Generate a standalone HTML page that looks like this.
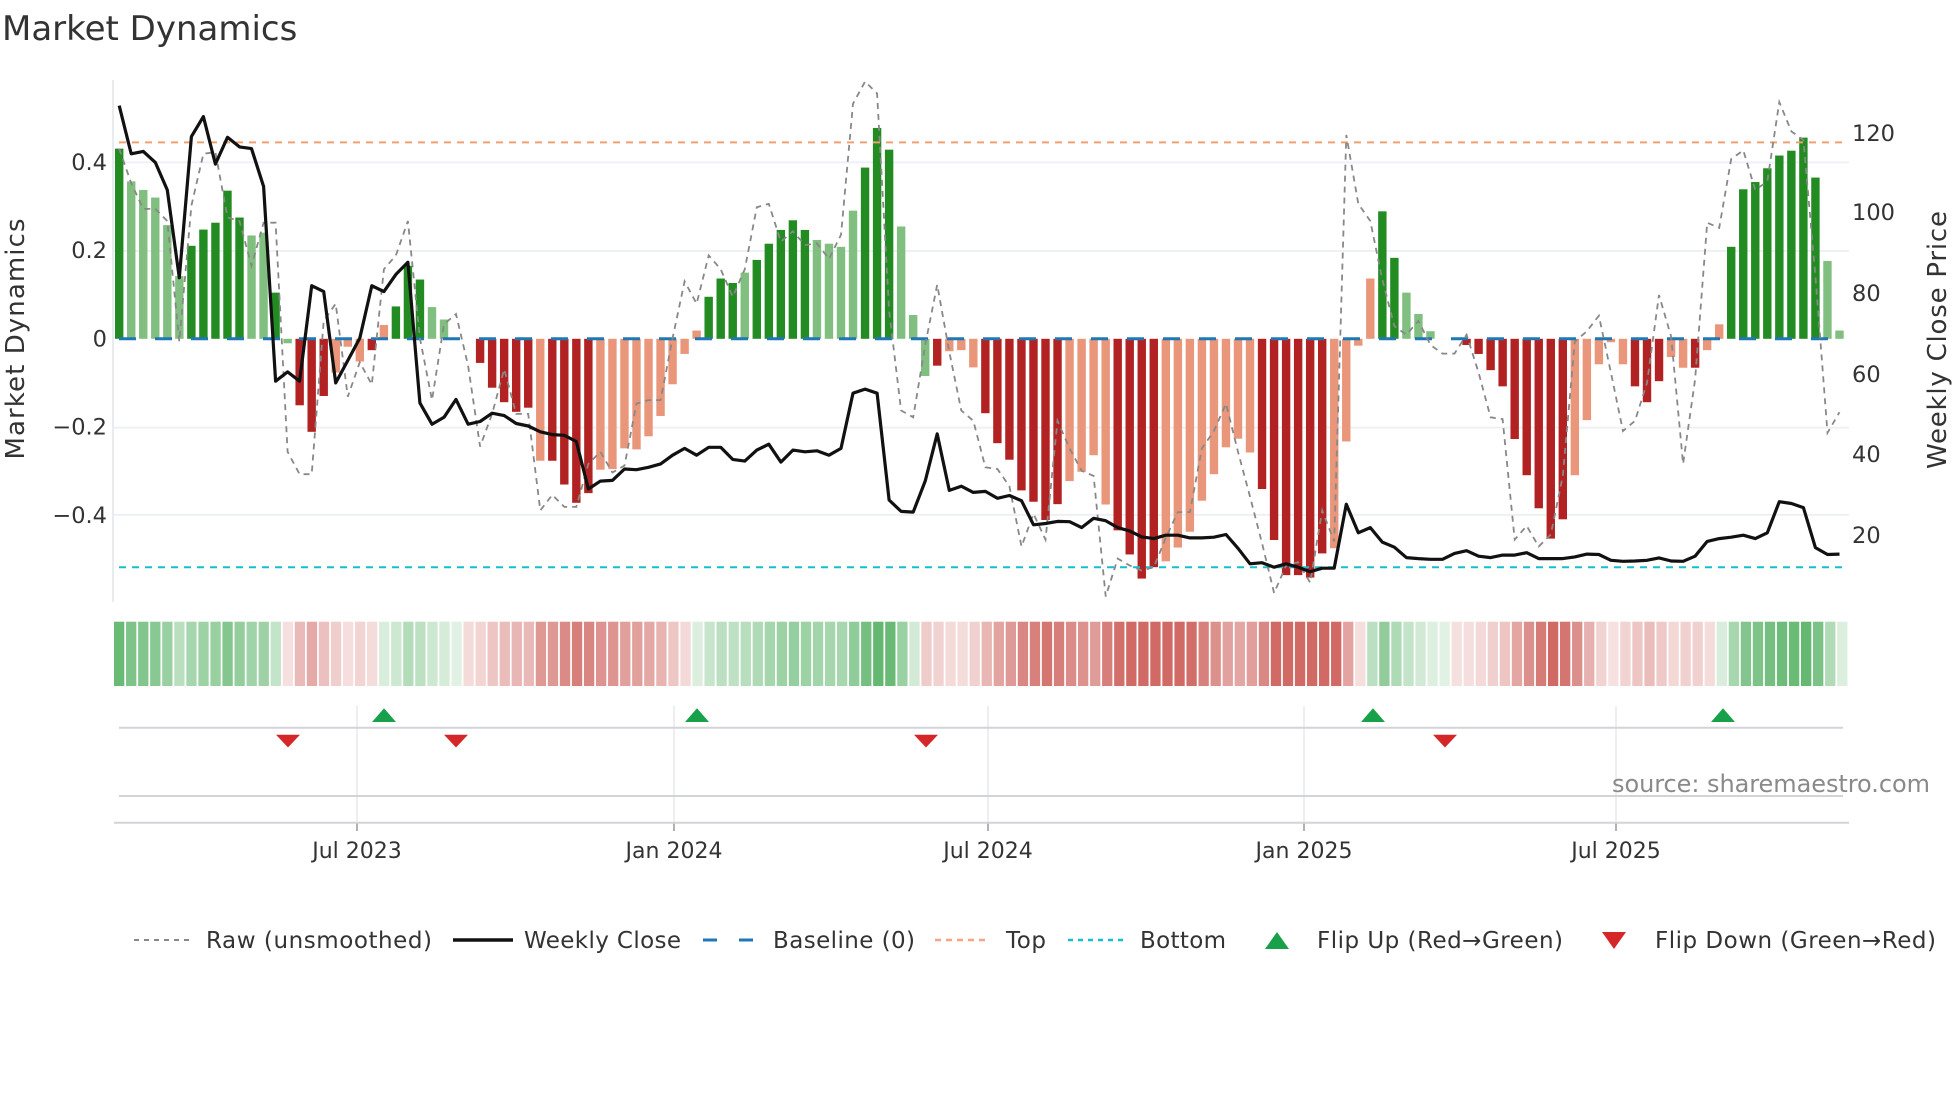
<!DOCTYPE html>
<html><head><meta charset="utf-8"><style>
html,body{margin:0;padding:0;background:#fff;width:1960px;height:1102px;overflow:hidden}
svg{display:block}
text{font-family:"DejaVu Sans","Liberation Sans",sans-serif;fill:#333}
</style></head><body>
<svg id="s" width="1960" height="1102" viewBox="0 0 1960 1102" xmlns="http://www.w3.org/2000/svg">
<rect width="1960" height="1102" fill="#fff"/>
<text x="2" y="40" font-size="34">Market Dynamics</text>
<g id="grid"></g>
<g id="bars"></g>
<g id="lines"></g>
<g font-size="22.5" text-anchor="end">
<text x="107" y="170">0.4</text>
<text x="107" y="258">0.2</text>
<text x="107" y="346.5">0</text>
<text x="107" y="434.5">−0.2</text>
<text x="107" y="523">−0.4</text>
</g>
<g font-size="22.5">
<text x="1852" y="141">120</text>
<text x="1852" y="220">100</text>
<text x="1852" y="301">80</text>
<text x="1852" y="382">60</text>
<text x="1852" y="462">40</text>
<text x="1852" y="543">20</text>
</g>
<text transform="translate(24,339) rotate(-90)" font-size="26" text-anchor="middle" textLength="241">Market Dynamics</text>
<text transform="translate(1946,340) rotate(-90)" font-size="26" text-anchor="middle" textLength="258">Weekly Close Price</text>
<g id="heat"></g>
<g id="lower"></g>
<text x="1612" y="792" font-size="24" fill="#8a8a8a" style="fill:#8a8a8a" textLength="318">source: sharemaestro.com</text>
<g font-size="22" text-anchor="middle">
<text x="357" y="858">Jul 2023</text>
<text x="674" y="858">Jan 2024</text>
<text x="988" y="858">Jul 2024</text>
<text x="1304" y="858">Jan 2025</text>
<text x="1616" y="858">Jul 2025</text>
</g>
<g id="legend" font-size="23">
<line x1="134" y1="940" x2="191" y2="940" stroke="#888" stroke-width="2" stroke-dasharray="5,5"/>
<text x="206" y="948" textLength="226">Raw (unsmoothed)</text>
<line x1="453" y1="940" x2="513" y2="940" stroke="#111" stroke-width="3.5"/>
<text x="524" y="948" textLength="157">Weekly Close</text>
<line x1="703" y1="940" x2="758" y2="940" stroke="#1f77b4" stroke-width="3" stroke-dasharray="14,22"/>
<text x="773" y="948" textLength="142">Baseline (0)</text>
<line x1="935" y1="940" x2="990" y2="940" stroke="#f4a582" stroke-width="2.5" stroke-dasharray="6,5"/>
<text x="1006" y="948" textLength="40">Top</text>
<line x1="1068" y1="940" x2="1123" y2="940" stroke="#17becf" stroke-width="2.5" stroke-dasharray="5,5"/>
<text x="1140" y="948" textLength="86">Bottom</text>
<polygon points="1265,949 1277,932 1289,949" fill="#18a04a"/>
<text x="1317" y="948" textLength="246">Flip Up (Red→Green)</text>
<polygon points="1602,932 1626,932 1614,949" fill="#d62728"/>
<text x="1655" y="948" textLength="281">Flip Down (Green→Red)</text>
</g>
</svg>
<script>
(function(){
var NS="http://www.w3.org/2000/svg";
function el(p,t,a){var e=document.createElementNS(NS,t);for(var k in a)e.setAttribute(k,a[k]);p.appendChild(e);return e;}
var Y=function(z){return 69.4+z*0.3445;};
var X=function(n){return 119.2+(n-1)*12.03;};
var base=Y(782);
var bz=[230,325,350,372,452,600,512,465,445,352,430,482,474,648,795,975,1052,948,880,805,848,815,742,688,570,610,690,726,782,820,852,924,966,994,982,1136,1136,1205,1258,1230,1162,1160,1100,1103,1065,1006,914,826,758,660,
607,620,590,553,506,466,438,466,495,506,515,410,285,170,233,456,713,890,860,818,815,865,998,1085,1133,1222,1255,1308,1262,1195,1168,1120,1263,1338,1408,1478,1445,1428,1388,1342,1252,1175,1097,1072,1112,1218,1366,1468,
1468,1475,1405,1390,1080,802,607,412,547,648,710,760,782,795,800,826,873,920,1073,1178,1274,1362,1306,1178,1018,856,792,856,920,966,905,835,866,866,815,740,515,348,327,287,250,236,198,314,556,758];
var ty="dllllldddddlldlDDDLLLDLdddlllxDDDDDLDDDDLLLLLLLLLdd"+"dlddddd"+"llllddd"+"lll"+"DLLLDDDDDDDLLLLDDDDLLLLLLLLDDDD"+"DDLLLLddllllxDDDDDDDDDLLLLLDDDLLDLLddddddddlll";
var cz=[105,245,238,270,350,605,195,137,275,197,225,230,340,905,878,905,628,645,910,845,780,628,645,595,560,968,1030,1010,958,1030,1022,998,1005,1028,1035,1052,1060,1062,1080,1218,1195,1193,1160,1162,1155,1145,1120,1100,
1120,1097,1097,1132,1137,1105,1088,1140,1105,1110,1107,1120,1100,940,928,940,1250,1283,1285,1195,1058,1222,1210,1228,1225,1245,1237,1252,1322,1318,1312,1313,1330,1303,1310,1330,1340,1357,1362,1352,1352,1360,1360,1358,1350,1390,1435,1432,1445,1435,
1445,1458,1448,1448,1262,1345,1330,1372,1387,1417,1420,1422,1422,1405,1397,1413,1417,1410,1410,1403,1420,1420,1420,1415,1407,1408,1425,1428,1427,1425,1418,1427,1428,1413,1370,1362,1358,1352,1362,1345,1255,1260,1272,1388,1408,1407];
var rz=[230,330,405,405,440,790,395,245,240,430,440,570,445,445,1110,1175,1175,730,680,950,850,915,580,540,440,780,960,740,710,860,1095,1000,870,1000,1000,1280,1235,1270,1270,1145,1110,1170,1150,970,960,960,780,615,680,540,
580,660,580,400,390,500,470,510,505,550,480,100,35,70,700,990,1010,800,625,820,990,1020,1155,1160,1210,1385,1290,1365,1020,1100,1165,1180,1530,1420,1440,1455,1445,1360,1285,1285,1100,1050,970,1110,1240,1375,1520,1440,
1430,1490,1280,1370,190,390,440,610,745,770,730,800,825,825,770,880,1010,1015,1365,1325,1385,1350,1180,790,760,715,880,1050,1020,910,655,775,1145,900,445,460,260,235,350,325,95,180,205,600,1055,995];
var g=document.getElementById("grid");
[Y(270),Y(527),Y(1040),Y(1293)].forEach(function(y){el(g,"line",{x1:113,x2:1849,y1:y,y2:y,stroke:"#edf0f5","stroke-width":2});});
el(g,"line",{x1:113,x2:113,y1:80,y2:602,stroke:"#e8ebf0","stroke-width":2});
var b=document.getElementById("bars");
var col={d:"#228b22",l:"#80bf80",D:"#b22222",L:"#e9967a"};
for(var i=0;i<144;i++){var t=ty[i];if(t==="x")continue;var y=Y(bz[i]);var x=X(i+1)-4.2;
if(y<base)el(b,"rect",{x:x,y:y,width:8.4,height:base-y,fill:col[t]});else el(b,"rect",{x:x,y:base,width:8.4,height:y-base,fill:col[t]});}
var L=document.getElementById("lines");
el(L,"line",{x1:119,x2:1843,y1:Y(212),y2:Y(212),stroke:"#f0a070","stroke-width":2,"stroke-dasharray":"7,6"});
el(L,"line",{x1:119,x2:1843,y1:Y(1445),y2:Y(1445),stroke:"#17becf","stroke-width":2,"stroke-dasharray":"7,6"});
el(L,"line",{x1:119,x2:1843,y1:base,y2:base,stroke:"#1f77b4","stroke-width":3,"stroke-dasharray":"17,19"});
function pts(a){return a.map(function(z,i){return X(i+1).toFixed(1)+","+Y(z).toFixed(1);}).join(" ");}
el(L,"polyline",{points:pts(rz),fill:"none",stroke:"#888","stroke-width":1.8,"stroke-dasharray":"6,5"});
el(L,"polyline",{points:pts(cz),fill:"none",stroke:"#111","stroke-width":3.2,"stroke-linejoin":"round"});
var h=document.getElementById("heat");
for(var i=0;i<144;i++){var v=(782-bz[i])/3/426.7;var a=0.16+0.68*Math.min(1,Math.abs(v)/0.45);
var c=v>=0?[70,170,85]:[200,78,72];var r=c.map(function(q){return Math.round(255*(1-a)+q*a);});
el(h,"rect",{x:114+i*12.05,y:621.7,width:10.3,height:64.3,fill:"rgb("+r.join(",")+")"});}
var lo=document.getElementById("lower");
[357,674,988,1304,1616].forEach(function(x){el(lo,"line",{x1:x,x2:x,y1:706,y2:822,stroke:"#e6e8ec","stroke-width":1.5});el(lo,"line",{x1:x,x2:x,y1:822,y2:831,stroke:"#999","stroke-width":1.5});});
el(lo,"line",{x1:119,x2:1843,y1:727.7,y2:727.7,stroke:"#d2d4d8","stroke-width":2});
el(lo,"line",{x1:119,x2:1843,y1:796,y2:796,stroke:"#d2d4d8","stroke-width":2});
el(lo,"line",{x1:114,x2:1849,y1:822.7,y2:822.7,stroke:"#d2d4d8","stroke-width":2});
[384,697,1373,1723].forEach(function(x){el(lo,"polygon",{points:(x-12)+",722 "+x+",708.3 "+(x+12)+",722",fill:"#18a04a"});});
[288,456,926,1445].forEach(function(x){el(lo,"polygon",{points:(x-12)+",734.7 "+(x+12)+",734.7 "+x+",747.5",fill:"#d62728"});});
})();
</script>
</body></html>
